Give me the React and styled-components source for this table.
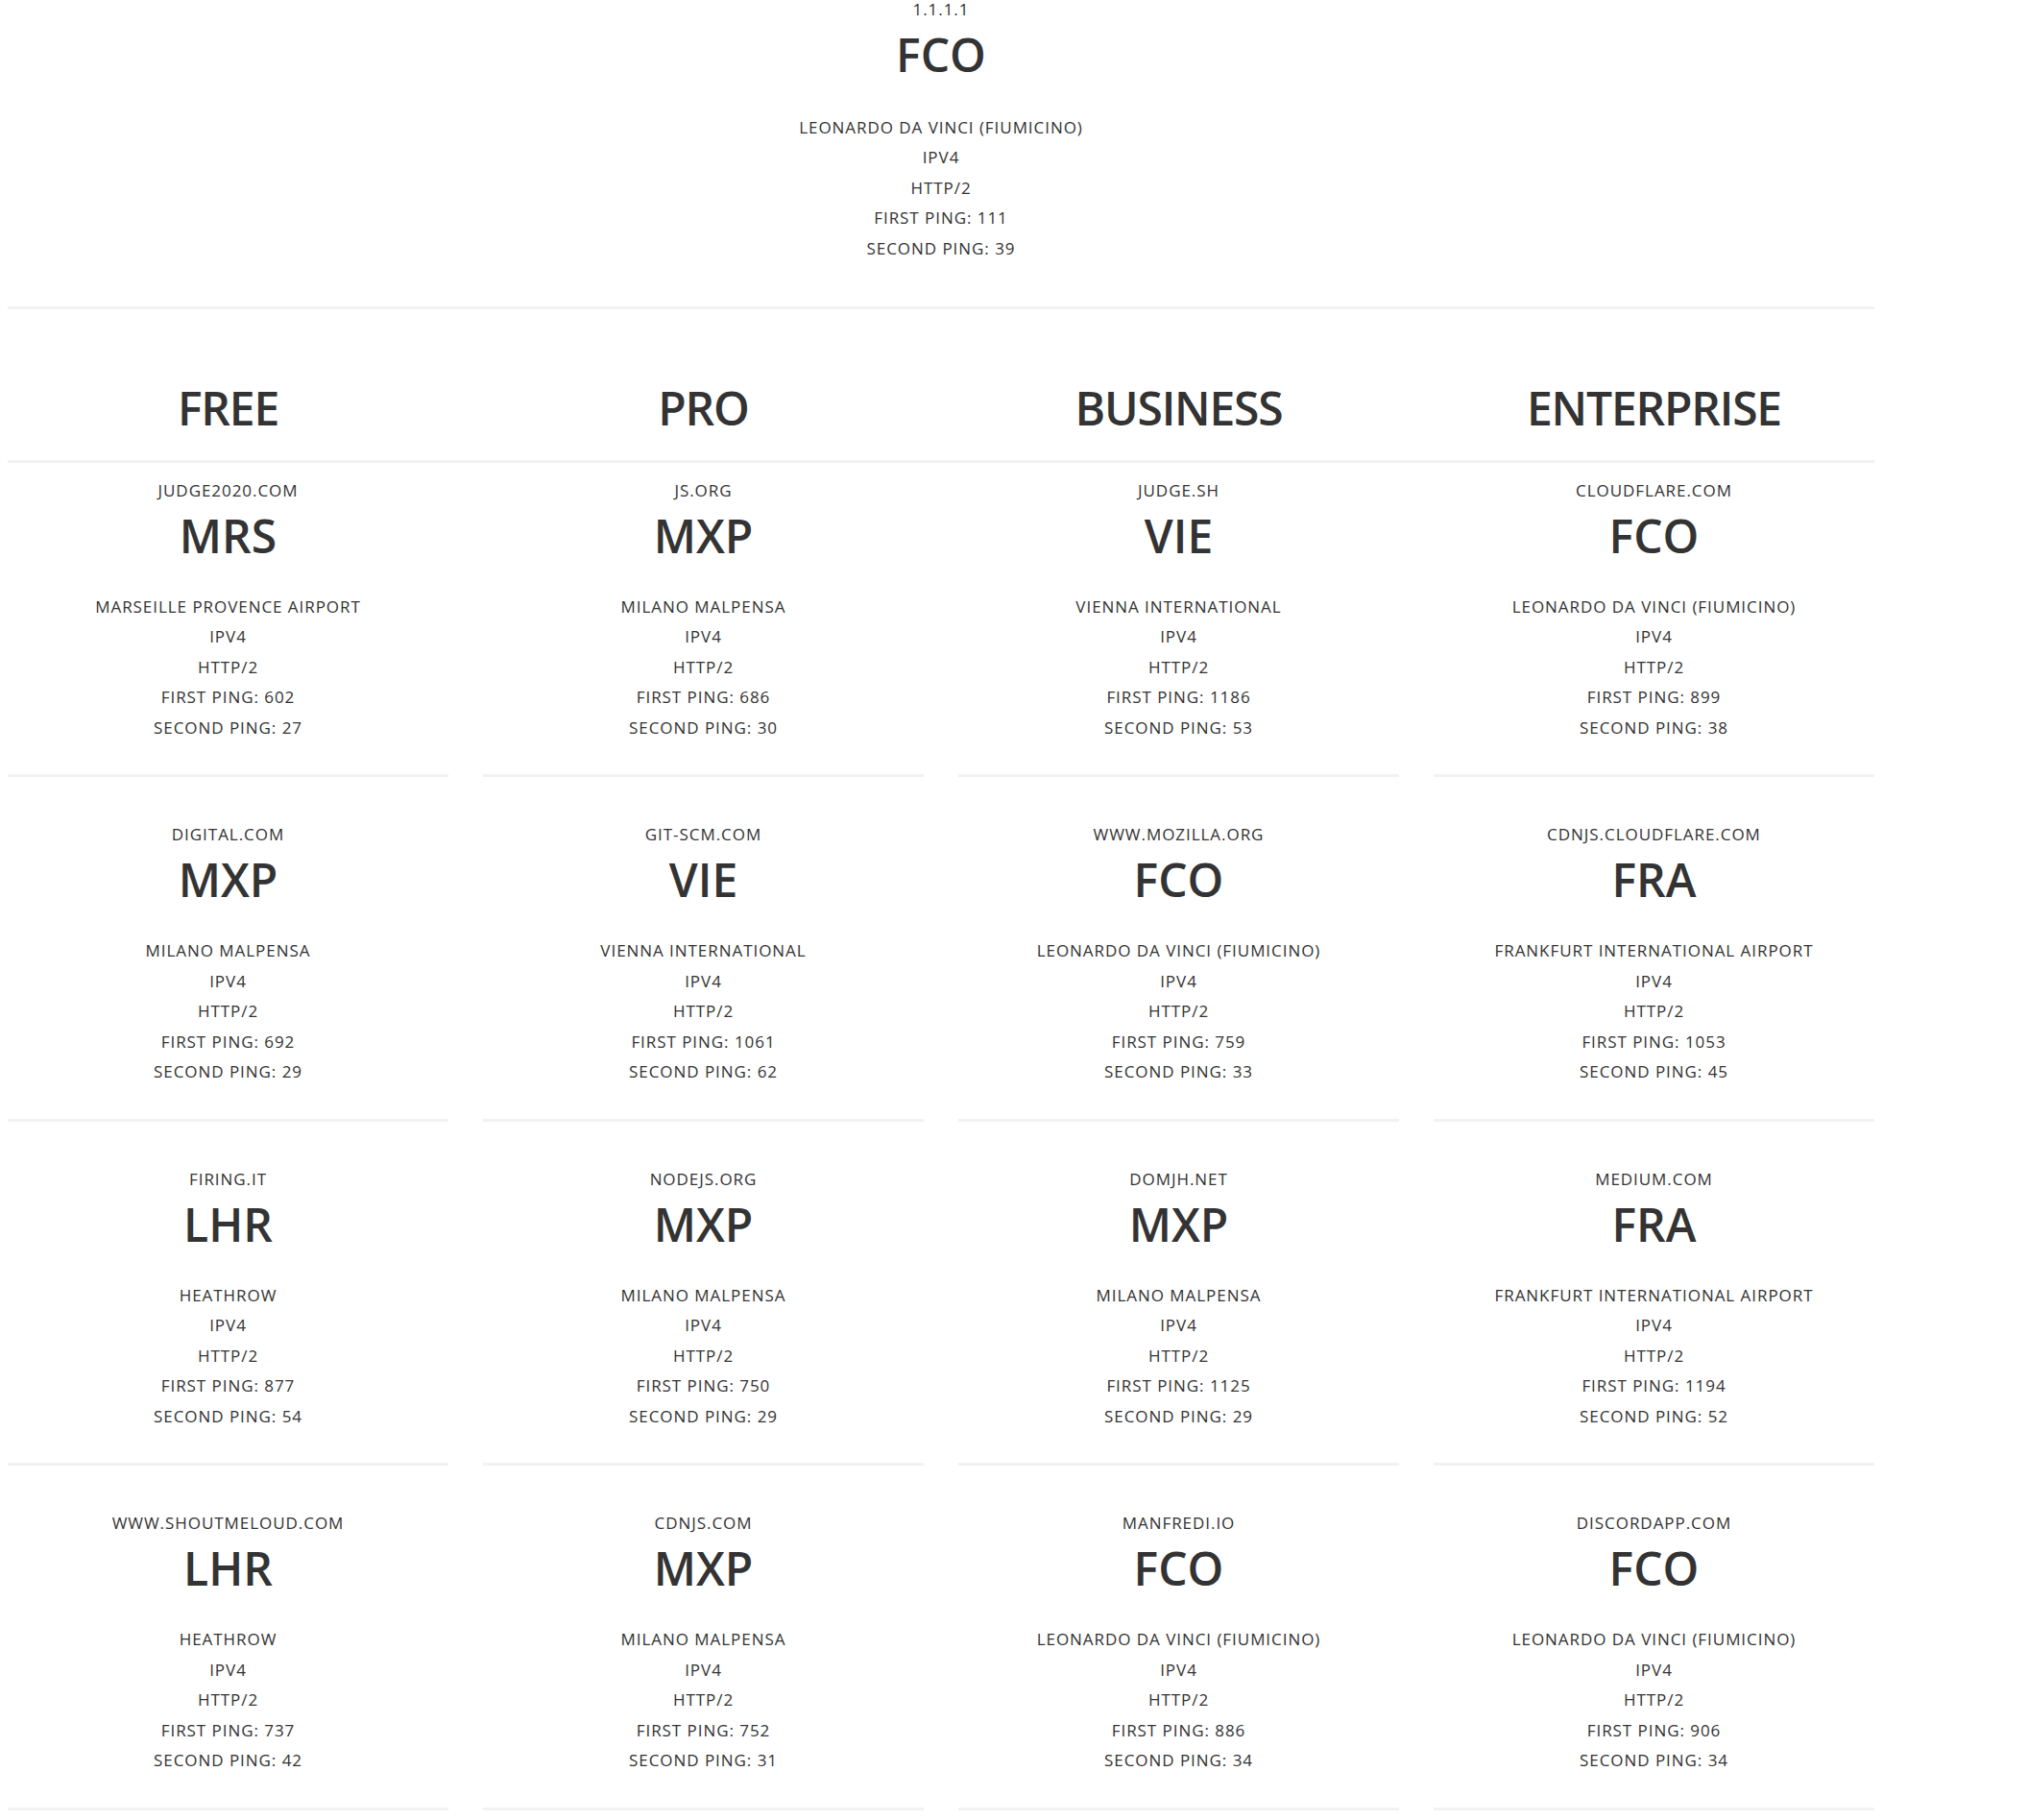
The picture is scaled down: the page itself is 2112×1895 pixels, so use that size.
import styled, { createGlobalStyle } from 'styled-components';

const GlobalStyle = createGlobalStyle`
  html, body {
    margin: 0;
    padding: 0;
    background: #ffffff;
  }

  body {
    font-family: 'Open Sans', 'Noto Sans', sans-serif;
    color: #333333;
  }
`;

const Page = styled.main`
  width: 1944px;
  padding: 0 8px;
  text-transform: uppercase;
  text-align: center;
`;

const Resolver = styled.section`
  padding-bottom: 45px;
  border-bottom: 3px solid #f2f2f2;
`;

const Domain = styled.div`
  font-size: 17px;
  line-height: ${({ compact }) => (compact ? '19px' : '24px')};
  letter-spacing: 0.95px;
`;

const Code = styled.div`
  font-size: 48px;
  font-weight: 600;
  line-height: 70px;
  margin-top: ${({ compact }) => (compact ? '3.4px' : '0')};
`;

const InfoList = styled.ul`
  list-style: none;
  margin: ${({ compact }) => (compact ? '24.3px' : '23px')} 0 0;
  padding: 0;
`;

const InfoItem = styled.li`
  font-size: 17px;
  line-height: 31.5px;
  letter-spacing: 0.95px;
`;

const PlanRow = styled.div`
  display: grid;
  grid-template-columns: repeat(4, 1fr);
  column-gap: 36px;
  border-bottom: 3px solid #f2f2f2;
`;

const PlanTitle = styled.h1`
  margin: 0;
  padding: 67.6px 0 19.4px;
  font-size: 48px;
  font-weight: 600;
  line-height: 70px;
  letter-spacing: -1.2px;
`;

const CardGrid = styled.div`
  display: grid;
  grid-template-columns: repeat(4, 1fr);
  grid-template-rows: repeat(4, auto);
  grid-auto-flow: column;
  column-gap: 36px;
  row-gap: 31.5px;
`;

const Card = styled.article`
  padding: 16.8px 0 32.7px;
  border-bottom: 3px solid #f2f2f2;
`;

const resolver = {
  domain: '1.1.1.1',
  code: 'FCO',
  airport: 'Leonardo da Vinci (Fiumicino)',
  first: 111,
  second: 39,
};

const plans = [
  {
    name: 'Free',
    sites: [
      { domain: 'judge2020.com', code: 'MRS', airport: 'Marseille Provence Airport', first: 602, second: 27 },
      { domain: 'digital.com', code: 'MXP', airport: 'Milano Malpensa', first: 692, second: 29 },
      { domain: 'firing.it', code: 'LHR', airport: 'Heathrow', first: 877, second: 54 },
      { domain: 'www.shoutmeloud.com', code: 'LHR', airport: 'Heathrow', first: 737, second: 42 },
    ],
  },
  {
    name: 'Pro',
    sites: [
      { domain: 'js.org', code: 'MXP', airport: 'Milano Malpensa', first: 686, second: 30 },
      { domain: 'git-scm.com', code: 'VIE', airport: 'Vienna International', first: 1061, second: 62 },
      { domain: 'nodejs.org', code: 'MXP', airport: 'Milano Malpensa', first: 750, second: 29 },
      { domain: 'cdnjs.com', code: 'MXP', airport: 'Milano Malpensa', first: 752, second: 31 },
    ],
  },
  {
    name: 'Business',
    sites: [
      { domain: 'judge.sh', code: 'VIE', airport: 'Vienna International', first: 1186, second: 53 },
      { domain: 'www.mozilla.org', code: 'FCO', airport: 'Leonardo da Vinci (Fiumicino)', first: 759, second: 33 },
      { domain: 'domjh.net', code: 'MXP', airport: 'Milano Malpensa', first: 1125, second: 29 },
      { domain: 'manfredi.io', code: 'FCO', airport: 'Leonardo da Vinci (Fiumicino)', first: 886, second: 34 },
    ],
  },
  {
    name: 'Enterprise',
    sites: [
      { domain: 'cloudflare.com', code: 'FCO', airport: 'Leonardo da Vinci (Fiumicino)', first: 899, second: 38 },
      { domain: 'cdnjs.cloudflare.com', code: 'FRA', airport: 'Frankfurt International Airport', first: 1053, second: 45 },
      { domain: 'medium.com', code: 'FRA', airport: 'Frankfurt International Airport', first: 1194, second: 52 },
      { domain: 'discordapp.com', code: 'FCO', airport: 'Leonardo da Vinci (Fiumicino)', first: 906, second: 34 },
    ],
  },
];

const SiteInfo = ({ site, compact }) => (
  <>
    <Domain compact={compact}>{site.domain}</Domain>
    <Code compact={compact}>{site.code}</Code>
    <InfoList compact={compact}>
      <InfoItem>{site.airport}</InfoItem>
      <InfoItem>IPv4</InfoItem>
      <InfoItem>HTTP/2</InfoItem>
      <InfoItem>First ping: {site.first}</InfoItem>
      <InfoItem>Second ping: {site.second}</InfoItem>
    </InfoList>
  </>
);

const App = () => (
  <>
    <GlobalStyle />
    <Page>
      <Resolver>
        <SiteInfo site={resolver} compact />
      </Resolver>

      <PlanRow>
        {plans.map((plan) => (
          <PlanTitle key={plan.name}>{plan.name}</PlanTitle>
        ))}
      </PlanRow>

      <CardGrid>
        {plans.map((plan) =>
          plan.sites.map((site) => (
            <Card key={plan.name + site.domain}>
              <SiteInfo site={site} />
            </Card>
          ))
        )}
      </CardGrid>
    </Page>
  </>
);

export default App;
